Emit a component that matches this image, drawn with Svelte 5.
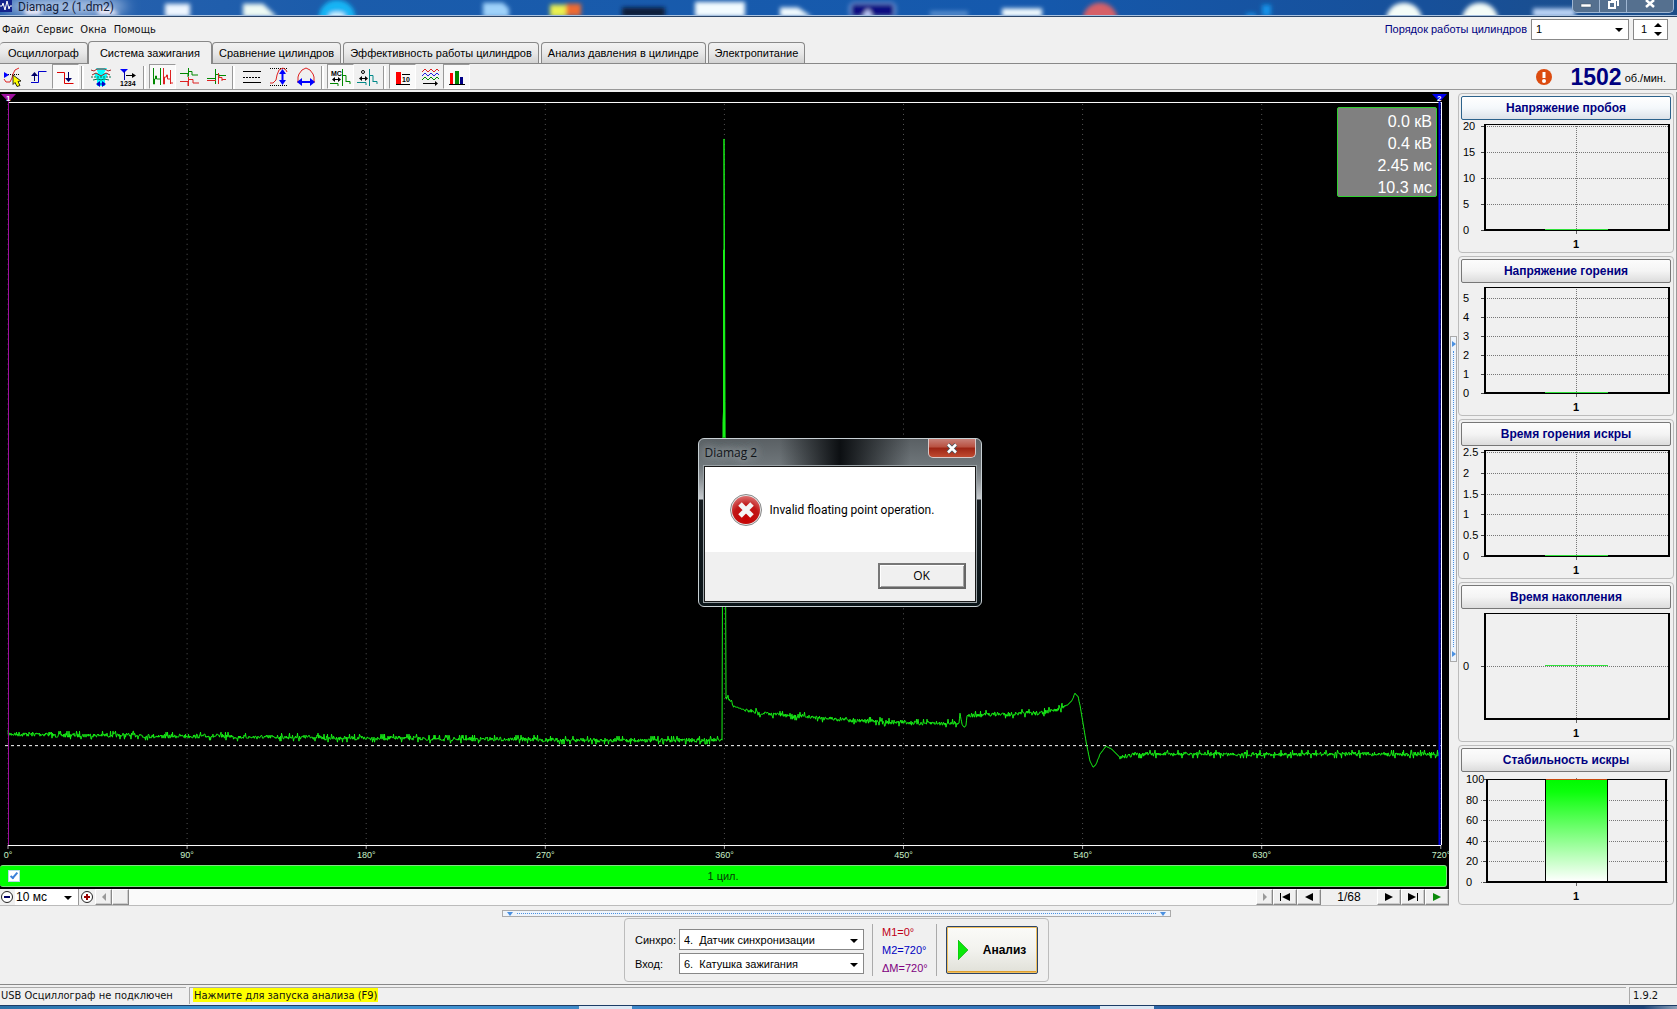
<script>
  const menu = ['Файл', 'Сервис', 'Окна', 'Помощь'];
  const tabs = [
    'Осциллограф',
    'Система зажигания',
    'Сравнение цилиндров',
    'Эффективность работы цилиндров',
    'Анализ давления в цилиндре',
    'Электропитание'
  ];
  const degrees = [0, 90, 180, 270, 360, 450, 540, 630, 720];
  const readings = ['0.0 кВ', '0.4 кВ', '2.45 мс', '10.3 мс'];

  const charts = [
    { title: 'Напряжение пробоя', ticks: [['20', 6], ['15', 32], ['10', 58], ['5', 84], ['0', 110]], mark: 109, focus: true },
    { title: 'Напряжение горения', ticks: [['5', 15], ['4', 34], ['3', 53], ['2', 72], ['1', 91], ['0', 110]], mark: 109 },
    { title: 'Время горения искры', ticks: [['2.5', 6], ['2', 27], ['1.5', 48], ['1', 68], ['0.5', 89], ['0', 110]], mark: 109 },
    { title: 'Время накопления', ticks: [['0', 57]], mark: 56 },
    { title: 'Стабильность искры', ticks: [['100', 7], ['80', 28], ['60', 48], ['40', 69], ['20', 89], ['0', 110]], bar: true }
  ];

  // Deterministic noise so the trace is the same on every render.
  let seed = 7;
  const noise = () => {
    seed = (seed * 16807) % 2147483647;
    const r = seed / 2147483647 - 0.5;
    return Math.round(r * (Math.abs(r) > 0.46 ? 8 : 4));
  };

  // Trace knots: [x, y, noisy]
  const before = [[8, 643, 1], [366, 647, 1], [600, 649, 1], [722, 649, 1]];
  const after = [
    [726, 607, 1], [730, 609, 1], [734, 615, 0], [745, 619, 1], [760, 622, 1], [800, 625, 1], [840, 628, 1],
    [890, 631, 1], [930, 632, 1], [959, 632, 0], [960, 622, 0], [962, 633, 0], [964, 636, 0], [966, 634, 0],
    [967, 624, 1], [1000, 623, 1], [1040, 622, 1], [1056, 619, 1], [1068, 613, 0], [1072, 609, 0], [1075, 602, 0],
    [1078, 605, 0], [1080, 614, 0], [1086, 650, 0], [1090, 670, 0], [1093, 676, 0], [1096, 673, 0], [1100, 663, 0],
    [1106, 655, 0], [1112, 658, 0], [1120, 666, 1], [1134, 663, 1], [1160, 663, 1], [1440, 663, 1]
  ];

  function trace(knots) {
    const pts = [];
    for (let i = 0; i < knots.length - 1; i++) {
      const [x0, y0, n] = knots[i];
      const [x1, y1] = knots[i + 1];
      for (let x = x0; x < x1; x += 0.5) {
        const y = y0 + ((y1 - y0) * (x - x0)) / (x1 - x0);
        pts.push(`${x},${Math.round(y) + (n ? noise() : 0)}`);
      }
    }
    return pts.join(' ');
  }
  const line = `${trace(before)} 722,649 723,330 724,310 724,47 725,310 726,607 ${trace(after)}`;
</script>

<div class="window">
  <header class="titlebar">
    <svg class="wall" viewBox="0 0 1677 16" preserveAspectRatio="none" aria-hidden="true">
      <defs>
        <filter id="soft" x="-20%" y="-60%" width="140%" height="220%"><feGaussianBlur stdDeviation="2" /></filter>
        <filter id="haze" x="-20%" y="-200%" width="140%" height="500%"><feGaussianBlur stdDeviation="7" /></filter>
      </defs>
      <ellipse cx="66" cy="7" rx="62" ry="9" fill="#b9cdea" filter="url(#haze)" />
      <g filter="url(#soft)">
        <path d="M25 16V9h16v7zM98 16V8l12 0 10 8z" fill="#f0eefa" />
        <rect x="165" y="4" width="25" height="14" fill="#eef6ff" />
        <path d="M243 18V4h20l14 14z" fill="#eefaf4" />
        <circle cx="337" cy="18" r="18" fill="#14b4f4" />
        <ellipse cx="337" cy="17" rx="8" ry="4" fill="#d8f6ff" />
        <path d="M483 18V3h20l6 6v9z" fill="#9fd2fa" />
        <rect x="550" y="5" width="16" height="13" fill="#eaf050" />
        <rect x="566" y="4" width="15" height="13" fill="#ee6a30" />
        <rect x="622" y="8" width="43" height="10" fill="#0a1c38" />
        <rect x="695" y="2" width="50" height="16" fill="#f2fbff" />
        <path d="M780 18V8h18l14 10z" fill="#f2fbff" />
        <rect x="850" y="3" width="45" height="16" rx="5" fill="#0c0c82" stroke="#7aa0e0" stroke-width="2" />
        <path d="M862 18l6-9 5 9z" fill="#c8d4ff" />
        <rect x="930" y="12" width="38" height="5" fill="#5d92cf" />
        <rect x="1002" y="9" width="40" height="9" fill="#f2fbff" />
        <circle cx="1100" cy="20" r="17" fill="#d66068" />
        <path d="M1246 14h10v4h-10zM1262 5h9v12h-9z" fill="#1492e8" />
        <circle cx="1404" cy="21" r="18" fill="#f4fcf8" />
        <circle cx="1480" cy="21" r="18" fill="#f4fcf8" />
        <rect x="1533" y="9" width="42" height="9" fill="#bcd4f6" />
      </g>
    </svg>
    <svg class="appicon" viewBox="0 0 12 12" aria-hidden="true">
      <rect width="12" height="12" fill="#14248c" />
      <path d="M0 6h2l1-3 2 7 2-9 2 8 1-3h2" fill="none" stroke="#fff" />
    </svg>
    <span class="apptitle">Diamag 2 (1.dm2)</span>
    <div class="winctl">
      <button aria-label="Свернуть"><svg viewBox="0 0 12 10"><rect x="1" y="4" width="10" height="3" fill="#fff" stroke="#456" stroke-width=".5" /></svg></button>
      <button aria-label="Восстановить"><svg viewBox="0 0 12 10"><path d="M4 0h7v6M2 2h6v6H2z" fill="none" stroke="#fff" stroke-width="2" /></svg></button>
      <button class="x" aria-label="Закрыть"><svg viewBox="0 0 12 10"><path d="M2 0l8 7M10 0L2 7" stroke="#fff" stroke-width="2.5" /></svg></button>
    </div>
  </header>

  <div class="menubar">
    <nav>
      {#each menu as m}<a href="#{m}">{m}</a>{/each}
    </nav>
    <div class="order">
      <label for="order">Порядок работы цилиндров</label>
      <div class="combo">
        <select id="order"><option>1</option></select>
        <svg class="arrow" viewBox="0 0 8 4"><path d="M0 0h8L4 4z" /></svg>
      </div>
      <div class="spin">
        <input type="text" value="1" aria-label="Номер цилиндра" />
        <svg viewBox="0 0 8 13"><path d="M0 4h8L4 0zM0 9h8l-4 4z" /></svg>
      </div>
    </div>
  </div>

  <div class="tabs" role="tablist">
    {#each tabs as t, i}
      <button role="tab" class:active={i === 1} aria-selected={i === 1}>{t}</button>
    {/each}
  </div>

  <div class="toolbar">
    <div class="tools">
      <div class="group first">
        <button aria-label="Курсор">
          <svg viewBox="0 0 22 20"><path d="M7 7.5h11" stroke="#000" stroke-dasharray="1 1" /><path d="M3 5l5 3-5 3z" fill="#00f" /><path d="M3 12l2 3h4l2-4 1-4 2-4 4-2" fill="none" stroke="#d22" /><path d="M12 8l8 6-3 .5 2 4-3 1-2-4-2 2z" fill="#ff0" stroke="#000" stroke-width=".8" /></svg>
        </button>
        <button aria-label="Фронт вверх">
          <svg viewBox="0 0 22 20"><path d="M3 15.500h7.500v-11h8" fill="none" stroke="#00c" /><path d="M6.500 14v-7" stroke="#006" /><path d="M3 9h7L6.500 5z" fill="#006" /></svg>
        </button>
        <button class="on" aria-label="Фронт вниз">
          <svg viewBox="0 0 22 20"><path d="M2 5.500h7.500v11h9" fill="none" stroke="#d00" /><path d="M13.500 5v8" stroke="#006" /><path d="M10 11h7l-3.500 4z" fill="#006" /></svg>
        </button>
      </div>
      <div class="group">
        <button aria-label="Наложение">
          <svg viewBox="0 0 22 20"><path d="M6 1h11l-3 5h4l-3 7v6H7v-6L4 6h4z" fill="#0ff" /><path d="M1 3l3 1 3-2h8l3 2 3-1M2 8l4-2 5 3 5-3 4 2" fill="none" stroke="#a22" /><path d="M1 10h20" stroke="#075" stroke-dasharray="2 1" /><path d="M3 13l5-1 3 1 3-1 5 1" fill="none" stroke="#075" /><path d="M8 17h6" stroke="#00c" /><path d="M10 14l-4 3 4 3zM12 14l4 3-4 3z" fill="#00c" /></svg>
        </button>
        <button aria-label="Нумерация">
          <svg viewBox="0 0 22 20"><path d="M3 2h8L7 6z" fill="#00f" /><path d="M7.500 4v9" stroke="#00a" /><path d="M9 8.500h8" stroke="#000" /><path d="M15 6l4 2.500-4 2.500z" /><text x="3" y="19" font-size="7" font-weight="700">1234</text></svg>
        </button>
      </div>
      <div class="group">
        <button class="on" aria-label="Последовательно">
          <svg viewBox="0 0 22 20"><path d="M1.500 1v16h1v-5h1v-3h1v3h4M8.500 1v17" fill="none" stroke="#080" /><path d="M11.500 1v16h1v-7h2v-2h1v4h3M18.500 3v14M19 16h2" fill="none" stroke="#d22" /></svg>
        </button>
        <button aria-label="Растр">
          <svg viewBox="0 0 22 20"><path d="M1 6.500h8V10M9.500 1v8M10 4.500h3V8h6" fill="none" stroke="#080" /><path d="M1 14.500h8V19M9.500 10v9M10 12.500h4V16h6" fill="none" stroke="#d22" /></svg>
        </button>
        <button aria-label="Парад">
          <svg viewBox="0 0 22 20"><path d="M1 11.500h8M9.500 2v15M10 7.500h3V11M13 8.500h7" fill="none" stroke="#080" /><path d="M1 13.500h9M12.500 6v11M13 10.500h3V14M16 12.500h4" fill="none" stroke="#d22" /></svg>
        </button>
      </div>
      <div class="group">
        <button aria-label="Линии">
          <svg viewBox="0 0 22 20"><path d="M2 4.500h18M2 15.500h18" stroke="#000" /><path d="M2 10.500h18" stroke="#000" stroke-dasharray="2 1" /></svg>
        </button>
        <button aria-label="Масштаб по вертикали">
          <svg viewBox="0 0 22 20"><path d="M2 1.500h17M2 18.500h17" stroke="#000" stroke-dasharray="1 1" /><path d="M2 16h3l3-3 1-5 2-5 4-2 3 2 1 2" fill="none" stroke="#d22" /><path d="M14.500 5v10" stroke="#00f" stroke-width="2" /><path d="M11 7h7l-3.500-5zM11 13h7l-3.500 5z" fill="#00f" /></svg>
        </button>
        <button aria-label="Масштаб по горизонтали">
          <svg viewBox="0 0 22 20"><path d="M3 15V10l1-3 3-4 4-2 4 2 3 4 1 3v5M2 15h18" fill="none" stroke="#d22" /><path d="M5 15h12" stroke="#00f" stroke-width="2" /><path d="M7 11v8l-5-4zM15 11v8l5-4z" fill="#00f" /></svg>
        </button>
      </div>
      <div class="group">
        <button class="on" aria-label="Миллисекунды">
          <svg viewBox="0 0 22 20"><text x="1" y="9" font-size="7" font-weight="700">МС</text><path d="M3 12.500h7" stroke="#000" /><path d="M5 10v5l-3-2.500zM8 10v5l3-2.500z" /><path d="M0 16.500h8V19M12.500 2v17M13 8.500h3V15M16 14.500h4V17" fill="none" stroke="#080" /></svg>
        </button>
        <button aria-label="Градусы">
          <svg viewBox="0 0 22 20"><circle cx="6" cy="5" r="1.500" fill="none" stroke="#000" /><path d="M3 11.500h7" stroke="#000" /><path d="M5 9v5l-3-2.500zM8 9v5l3-2.500z" /><path d="M0 15.500h9V18M12.500 2v17M13 8.500h3V15M16 14.500h4V17" fill="none" stroke="#088" /></svg>
        </button>
      </div>
      <div class="group last">
        <button class="on" aria-label="Значения">
          <svg viewBox="0 0 22 20"><rect x="4" y="5" width="5" height="12" fill="#f00" /><path d="M4 17.500h14M10 7.500h8" stroke="#000" /><text x="10" y="15" font-size="7" font-weight="700">10</text></svg>
        </button>
        <button aria-label="Наложенные кривые">
          <svg viewBox="0 0 22 20"><path d="M3 5l3-3 3 3 3-3 3 3 3-3 2 2" fill="none" stroke="#d22" /><path d="M3 9l3-3 3 3 3-3 3 3 3-3 2 2" fill="none" stroke="#22d" /><path d="M3 13l3-3 3 3 3-3 3 3 3-3 2 2" fill="none" stroke="#080" /><path d="M4 16.500h14" stroke="#000" /><path d="M16 14l3 2.500-3 2.500z" /></svg>
        </button>
        <button class="on" aria-label="Гистограммы">
          <svg viewBox="0 0 22 20"><rect x="4" y="6" width="3" height="11" fill="#f00" /><rect x="9" y="4" width="4" height="13" fill="#080" /><rect x="14" y="10" width="3" height="7" fill="#008" /><path d="M3 17.500h16" stroke="#000" /></svg>
        </button>
      </div>
    </div>
    <div class="rpm">
      <svg viewBox="0 0 16 16" aria-label="Внимание"><circle cx="8" cy="8" r="8" fill="#dc4c10" /><path d="M8 3v6" stroke="#fff" stroke-width="3" /><circle cx="8" cy="12" r="2" fill="#fff" /></svg>
      <strong>1502</strong><span>об./мин.</span>
    </div>
  </div>

  <main>
    <section class="scope">
      <div class="plot">
        <svg class="wave" viewBox="0 0 1449 774" preserveAspectRatio="none" aria-label="Осциллограмма">
          {#each degrees as d}
            <path d="M{8 + d * 1.99} 12V754" class="grid" />
            <path d="M{8 + d * 1.99} 754v4" stroke="#aaa" />
          {/each}
          <path d="M8 10.500H1441M8 754.500H1441" stroke="#fff" />
          <path d="M5 654.500H1441" stroke="#fff" stroke-dasharray="3 3" />
          <polyline points={line} fill="none" stroke="#17f017" />
          <path d="M724 158V346" stroke="#17f017" stroke-width="2" />
          <path d="M8.500 10V754" stroke="#a010a0" />
          <path d="M1439.500 10V754" stroke="#00d" stroke-width="2" />
          <path d="M1441.500 10V754" stroke="#fff" />
          <path d="M1 2h15L8.500 10z" fill="#a010a0" />
          <path d="M1432 2h15l-7.500 8z" fill="#00e" />
          <text x="6" y="9" class="mk">1</text>
          <text x="1437" y="9" class="mk">2</text>
        </svg>
        <div class="readout">
          {#each readings as r}<span>{r}</span>{/each}
        </div>
      </div>
      <div class="axis">
        {#each degrees as d}<span>{d}°</span>{/each}
      </div>
      <label class="cyl">
        <input type="checkbox" checked />
        <span>1 цил.</span>
      </label>
      <div class="scroll">
        <button class="flat" aria-label="Уменьшить"><svg viewBox="0 0 14 14"><circle cx="6" cy="7" r="5.500" fill="#fff" stroke="#222" /><path d="M3 7h6" stroke="#006" stroke-width="2" /></svg></button>
        <div class="combo zoom">
          <select aria-label="Развёртка"><option>10 мс</option></select>
          <svg class="arrow" viewBox="0 0 8 4"><path d="M0 0h8L4 4z" /></svg>
        </div>
        <button class="flat plus" aria-label="Увеличить"><svg viewBox="0 0 14 14"><circle cx="7" cy="7" r="5.500" fill="#fff" stroke="#222" /><path d="M4 7h6M7 4v6" stroke="#900" stroke-width="2" /></svg></button>
        <button class="raised sm" aria-label="Влево"><svg viewBox="0 0 12 10"><path d="M8 1v8L4 5z" fill="#999" /></svg></button>
        <button class="raised sm" aria-label="Ползунок"></button>
        <div class="track"></div>
        <button class="raised sm" aria-label="Вправо"><svg viewBox="0 0 12 10"><path d="M4 1v8l4-4z" fill="#999" /></svg></button>
        <button class="raised" aria-label="В начало"><svg viewBox="0 0 12 10"><path d="M1 1h1v8H1zM11 1v8L3 5z" /></svg></button>
        <button class="raised" aria-label="Назад"><svg viewBox="0 0 12 10"><path d="M10 1v8L2 5z" /></svg></button>
        <span class="page">1/68</span>
        <button class="raised" aria-label="Вперёд"><svg viewBox="0 0 12 10"><path d="M2 1v8l8-4z" /></svg></button>
        <button class="raised" aria-label="В конец"><svg viewBox="0 0 12 10"><path d="M1 1v8l8-4zM10 1h1v8h-1z" /></svg></button>
        <button class="raised" aria-label="Пуск"><svg viewBox="0 0 12 10"><path d="M2 1v8l8-4z" fill="#0a8a0a" /></svg></button>
      </div>
    </section>

    <div class="vsplit">
      <div>
        <svg viewBox="0 0 4 6"><path d="M0 0v6l4-3z" fill="#4a90e0" /></svg>
        <i></i>
        <svg viewBox="0 0 4 6"><path d="M0 0v6l4-3z" fill="#4a90e0" /></svg>
      </div>
    </div>

    <aside>
      {#each charts as c}
        <section class="card">
          <button class:focus={c.focus}>{c.title}</button>
          <svg viewBox="0 0 210 132" aria-label={c.title}>
            {#each c.ticks as [t, y]}
              <text x={c.bar ? 5 : 2} y={y + 4}>{t}</text>
              <path d="M20 {y + 0.5}H208" class="dots" />
              <path d="M{c.bar ? 22 : 20} {y + 0.5}h4" stroke="#444" />
            {/each}
            <path d="M115.500 6V114" class="dots" />
            <path d="M115.500 110v4" stroke="#666" />
            {#if c.bar}
              <defs>
                <linearGradient id="fill" x1="0" y1="0" x2="0" y2="1"><stop offset="0" stop-color="#00fa00" /><stop offset=".12" stop-color="#0bff0b" /><stop offset="1" stop-color="#fff" /></linearGradient>
              </defs>
              <path d="M26 7.500H205" stroke="#000" />
              <path d="M205 7v103" stroke="#000" stroke-width="2" />
              <path d="M26 7v103H206" fill="none" stroke="#000" stroke-width="2" />
              <rect x="84.500" y="7.500" width="62" height="102" fill="url(#fill)" stroke="#000" />
              <path d="M85 7.500h61" stroke="#c84a10" />
            {:else}
              <path d="M23 4.500H209" stroke="#000" />
              <path d="M24 4v106H208V4" fill="none" stroke="#000" stroke-width="2" />
              <path d="M84 {c.mark + 0.5}h63" stroke="#2fe03a" />
            {/if}
            <text x="115" y="128" text-anchor="middle" font-weight="700">1</text>
          </svg>
        </section>
      {/each}
    </aside>
  </main>

  <footer class="control">
    <div class="hsplit">
      <svg viewBox="0 0 6 4"><path d="M0 0h6L3 4z" fill="#4a90e0" /></svg>
      <i></i>
      <svg viewBox="0 0 6 4"><path d="M0 0h6L3 4z" fill="#4a90e0" /></svg>
    </div>
    <div class="panel">
      <div class="fields">
        <label for="sync">Синхро:</label>
        <div class="combo">
          <select id="sync"><option>4.&nbsp; Датчик синхронизации</option></select>
          <svg class="arrow" viewBox="0 0 8 4"><path d="M0 0h8L4 4z" /></svg>
        </div>
        <label for="input">Вход:</label>
        <div class="combo">
          <select id="input"><option>6.&nbsp; Катушка зажигания</option></select>
          <svg class="arrow" viewBox="0 0 8 4"><path d="M0 0h8L4 4z" /></svg>
        </div>
      </div>
      <div class="marks">
        <span class="m1">M1=0°</span>
        <span class="m2">M2=720°</span>
        <span class="dm">ΔM=720°</span>
      </div>
      <button class="run">
        <svg viewBox="0 0 10 20"><path d="M0 0v20l10-10z" fill="#0be80b" stroke="#0a9a0a" stroke-width=".6" /></svg>
        <span>Анализ</span>
      </button>
    </div>
  </footer>

  <div class="status">
    <span class="conn">USB Осциллограф не подключен</span>
    <span class="hint"><mark>Нажмите для запуска анализа (F9)</mark></span>
    <span class="ver">1.9.2</span>
  </div>
  <div class="taskbar"></div>

  <div class="dialog" role="dialog" aria-labelledby="dlgtitle">
    <div class="dlghead">
      <span id="dlgtitle">Diamag 2</span>
      <button aria-label="Закрыть"><svg viewBox="0 0 12 11"><path d="M2 1.500l8 8M10 1.500l-8 8" stroke="#44555f" stroke-width="4" /><path d="M2 1.500l8 8M10 1.500l-8 8" stroke="#fff" stroke-width="2.500" /></svg></button>
    </div>
    <div class="dlgbody">
      <div class="msg">
        <svg viewBox="0 0 32 32" aria-hidden="true">
          <defs><radialGradient id="red" cx=".5" cy=".8" r=".8"><stop offset="0" stop-color="#c80000" /><stop offset=".6" stop-color="#c01818" /><stop offset="1" stop-color="#dc7070" /></radialGradient></defs>
          <circle cx="16" cy="16" r="15.500" fill="#e8e8e8" stroke="#888" />
          <circle cx="16" cy="16" r="14" fill="url(#red)" />
          <path d="M10 10l12 12M22 10L10 22" stroke="#f4f4f4" stroke-width="5" />
        </svg>
        <span>Invalid floating point operation.</span>
      </div>
      <div class="actions"><button>OK</button></div>
    </div>
  </div>
</div>

<style>
  :global(body) { margin: 0; background: #f0f0f0; }
  .window {
    position: relative;
    display: flex;
    flex-direction: column;
    min-height: 100vh;
    background: #f0f0f0;
    color: #000;
    font: 11px/16px 'Liberation Sans', Arial, sans-serif;
    overflow: hidden;
  }
  .window *, .window *::before { box-sizing: border-box; }
  svg { display: block; }
  button, select, input { font: inherit; color: inherit; margin: 0; padding: 0; border-radius: 0; }
  button { display: flex; align-items: center; justify-content: center; }

  .titlebar {
    position: relative;
    display: flex;
    height: 17px;
    background: linear-gradient(90deg, #2a62ae, #1b5cab 20%, #1559ad 60%, #17509a 85%, #1c4d88);
    border-bottom: 1px solid #2c4668;
    box-shadow: inset 0 -1px #a9c2e0;
  }
  .wall { position: absolute; inset: 0 0 2px; width: 100%; height: 15px; }
  .appicon { position: relative; width: 12px; height: 12px; }
  .apptitle { position: relative; margin-left: 6px; font: 12px/14px Roboto, sans-serif; color: #12203a; }
  .winctl {
    position: relative;
    display: flex;
    height: 13px;
    margin: 0 3px 0 auto;
    border: 1px solid #9fb6d2;
    border-top: 0;
    border-radius: 0 0 5px 5px;
    background: #55708f;
  }
  .winctl button { width: 27px; height: 12px; border: 0; border-right: 1px solid #9fb6d2; background: none; align-items: flex-start; }
  .winctl .x { width: 46px; border: 0; }
  .winctl svg { width: 12px; height: 10px; }

  .menubar { display: flex; justify-content: space-between; height: 24px; padding-right: 9px; }
  nav { display: flex; gap: 7px; padding: 5px 0 0 2px; font: 11px/16px 'DejaVu Sans Condensed', Tahoma, sans-serif; }
  nav a { color: #111; text-decoration: none; }
  .order { display: flex; align-items: center; gap: 4px; color: #000080; }
  .order .combo { width: 98px; color: #000; }
  .combo { position: relative; height: 21px; }
  .combo select {
    appearance: none;
    width: 100%;
    height: 100%;
    padding: 0 20px 0 4px;
    border: 1px solid #888;
    background: #fff;
    outline: 0;
  }
  .arrow { position: absolute; right: 6px; top: 50%; width: 8px; height: 4px; margin-top: -1px; pointer-events: none; }
  .spin { display: flex; align-items: center; width: 35px; height: 21px; border: 1px solid #888; background: #fff; color: #000; }
  .spin input { width: 20px; padding-left: 7px; border: 0; background: none; outline: 0; }
  .spin svg { width: 8px; height: 13px; }

  .tabs { display: flex; align-items: flex-end; gap: 2px; height: 23px; border-bottom: 1px solid #888; }
  .tabs button {
    height: 21px;
    padding: 0 6px;
    border: 1px solid #888;
    border-bottom: 0;
    border-radius: 4px 4px 0 0;
    background: linear-gradient(#f2f2f2, #e8e8e8 50%, #d2d2d2);
    white-space: nowrap;
  }
  .tabs button:first-child { padding: 0 8px; border-left: 0; margin-right: -2px; }
  .tabs .active { height: 23px; margin-bottom: -1px; margin-right: -2px; padding: 0 11px; background: #f0f0f0; }

  .toolbar { display: flex; justify-content: space-between; height: 26px; border-bottom: 1px solid #999; border-right: 1px solid #999; }
  .tools { display: flex; }
  .group { position: relative; display: flex; margin-right: 8px; }
  .group::after { content: ''; position: absolute; right: -5px; top: 2px; bottom: 0; width: 2px; border-left: 1px solid #999; background: #fff; }
  .group.last::after { display: none; }
  .group.first { margin-left: -2px; }
  .group button { width: 27px; height: 25px; border: 1px solid transparent; background: none; }
  .group .on { border-color: #999 #fff #fff #999; background: #f9f9f9; }
  .group svg { width: 22px; height: 20px; }
  .rpm { display: flex; align-items: center; padding-right: 10px; }
  .rpm svg { width: 16px; height: 16px; }
  .rpm strong { margin-left: 18px; font-size: 23px; line-height: 24px; color: #000080; }
  .rpm span { margin: 3px 0 0 3px; }

  main { display: flex; flex: 1; padding-top: 2px; }
  .scope { display: flex; flex-direction: column; flex: 1; min-width: 0; background: #000; }
  .plot { position: relative; flex: 1; min-height: 300px; }
  .wave { position: absolute; inset: 0; width: 100%; height: 100%; }
  .wave polyline { shape-rendering: crispEdges; }
  .grid { stroke: #555; stroke-dasharray: 1 4; }
  .mk { fill: #fff; font-size: 8px; font-weight: 700; }
  .readout {
    position: absolute;
    right: 12px;
    top: 15px;
    display: flex;
    flex-direction: column;
    width: 100px;
    height: 90px;
    padding: 3px 4px 0 0;
    border: 1px solid #2fd02f;
    border-radius: 2px;
    background: #808080;
    color: #fff;
    font-size: 16px;
    line-height: 22px;
    text-align: right;
  }
  .axis { display: flex; justify-content: space-between; margin-top: -17px; padding: 0 8px; height: 14px; position: relative; color: #c8f0c8; font-size: 9px; line-height: 14px; }
  .axis span { display: flex; justify-content: center; width: 0; }
  .cyl {
    position: relative;
    display: flex;
    align-items: center;
    height: 22px;
    margin: 3px 2px 2px 0;
    padding-left: 8px;
    border: 1px solid #80e080;
    border-left: 0;
    border-radius: 3px;
    background: #0f0;
    color: #063c06;
  }
  .cyl input { appearance: none; width: 12px; height: 12px; border: 1px solid #b8d8e8; background: #fff; position: relative; }
  .cyl input::before { content: ''; display: block; width: 4px; height: 8px; margin: 0 0 0 3px; border: solid #3a80d8; border-width: 0 2px 2px 0; rotate: 40deg; }
  .cyl span { flex: 1; text-align: center; margin-right: 20px; }
  .scroll { display: flex; height: 17px; background: #f0f0f0; border-bottom: 1px solid #bbb; font-size: 12px; }
  .scroll button { height: 16px; background: #f0f0f0; }
  .flat { width: 15px; border: 0; }
  .flat svg { width: 14px; height: 14px; }
  .plus { width: 17px; border-left: 1px solid #999; }
  .zoom { width: 63px; height: 16px; }
  .zoom select { border: 0; padding-left: 1px; }
  .raised { width: 24px; border: 1px solid; border-color: #fff #888 #888 #fff; box-shadow: inset -1px -1px #ccc; }
  .raised svg { width: 12px; height: 10px; }
  .sm { width: 17px; }
  .track { flex: 1; background: #fafafa; }
  .page { width: 56px; text-align: center; }

  .vsplit { display: flex; align-items: center; width: 9px; padding-left: 1px; }
  .vsplit div { display: flex; flex-direction: column; align-items: center; width: 7px; height: 40%; padding: 4px 0; border: 1px solid #aaa; background: #eef4fb; }
  .vsplit svg { width: 4px; height: 6px; }
  .vsplit i { flex: 1; margin: 4px 0; border-left: 1px dotted #4a90e0; }

  aside { width: 219px; display: flex; flex-direction: column; gap: 3px; padding: 1px 2px 0 0; border-right: 1px solid #999; }
  .card { height: 160px; padding: 2px; border: 1px solid #bcbcbc; border-radius: 4px; }
  .card button {
    width: 100%;
    height: 24px;
    border: 1px solid #777;
    border-radius: 2px;
    background: linear-gradient(#fcfcfc, #f4f4f4 50%, #dcdcdc);
    color: #000080;
    font-size: 12px;
    font-weight: 700;
  }
  .card .focus { border-color: #2c628b; background: linear-gradient(#fff, #f4f8fb 50%, #dce2e8); }
  .card svg { width: 100%; height: 132px; overflow: visible; font-size: 11px; }
  .dots { stroke: #777; stroke-dasharray: 1 1; }

  .control { display: flex; flex-direction: column; align-items: center; height: 79px; padding: 4px 3px 0 0; border-bottom: 1px solid #888; border-right: 1px solid #999; }
  .hsplit { display: flex; align-items: center; width: 40%; height: 7px; padding: 0 4px; border: 1px solid #aaa; background: #eef4fb; }
  .hsplit svg { width: 6px; height: 4px; }
  .hsplit i { flex: 1; margin: 0 4px; border-top: 1px dotted #4a90e0; }
  .panel { display: flex; align-items: center; height: 64px; margin-top: 1px; padding: 0 10px; border: 1px solid #bcbcbc; border-radius: 4px; }
  .fields { display: grid; grid-template-columns: 44px 185px; row-gap: 3px; align-items: center; padding-top: 3px; }
  .marks { display: flex; flex-direction: column; justify-content: space-between; width: 65px; height: 52px; margin: 0 9px 0 8px; padding-left: 9px; border-left: 1px solid #aaa; border-right: 1px solid #aaa; }
  .m1 { color: #c00018; }
  .m2 { color: #0000c0; }
  .dm { color: #800080; }
  .run {
    width: 92px;
    height: 48px;
    gap: 15px;
    border: 1px solid #2c4468;
    border-radius: 2px;
    background: linear-gradient(#fbfbf8, #f2f2ee 50%, #e0e0d8);
    box-shadow: inset 0 0 0 1px #f0c060, inset 0 -2px #e0a030;
    font-size: 12px;
    font-weight: 700;
  }
  .run svg { width: 10px; height: 20px; }

  .status { display: flex; gap: 3px; height: 20px; padding-top: 2px; font: 11px/16px 'DejaVu Sans Condensed', Tahoma, sans-serif; color: #111; }
  .status > span { height: 17px; border-top: 1px solid #aaa; border-left: 1px solid #aaa; padding-left: 3px; white-space: nowrap; }
  .status .conn { width: 186px; border-left: 0; padding-left: 1px; }
  .status .hint { flex: 1; }
  .status .ver { width: 48px; }
  mark { display: inline-block; height: 14px; line-height: 15px; background: #ff0; color: #111; padding: 0 1px; }
  .taskbar {
    height: 4px;
    border-top: 1px solid #1d3c66;
    background: linear-gradient(90deg, #2a70a8, #3f9ad8 15%, #3f8ac8 34.5%, #dbe8f4 34.5%, #dbe8f4 37.7%, #3c86c8 37.7%, #3070b4 65.6%, #dbe8f4 65.6%, #dbe8f4 68.8%, #2c66a8 68.8%, #1c4478 98%, #8aa0b8);
  }

  .dialog {
    position: absolute;
    left: calc(50% - 141px);
    top: 438px;
    width: 284px;
    padding: 0 5px 4px;
    border: 1px solid #c8d0d4;
    border-radius: 6px;
    background: linear-gradient(#5a6064, #70777b 27px, #8a9094 40px, #c8ccd0 60px, #161c20 61px, #0a1418);
    font: 12px/16px 'Open Sans', 'Segoe UI', sans-serif;
  }
  .dlghead {
    display: flex;
    justify-content: space-between;
    height: 27px;
    background: linear-gradient(90deg, transparent 28%, #0c0f12 50%, transparent 76%);
  }
  .dlghead span { padding: 5px 0 0 1px; line-height: 17px; color: #101418; text-shadow: 0 0 8px #aab0b4, 0 0 8px #aab0b4; }
  .dlghead button {
    width: 48px;
    height: 19px;
    border: 1px solid #d8c8c8;
    border-top: 0;
    border-radius: 0 0 5px 5px;
    background: linear-gradient(#c88078, #b85040 45%, #9c2414 50%, #c04a30);
  }
  .dlghead svg { width: 12px; height: 11px; }
  .dlgbody { border: 1px solid #1a1a1a; outline: 1px solid #9aa2a6; background: #fff; }
  .msg { display: flex; align-items: center; gap: 8px; height: 85px; padding-left: 25px; font-family: Roboto, sans-serif; }
  .msg svg { width: 32px; height: 32px; flex: none; }
  .actions { display: flex; justify-content: flex-end; height: 49px; padding: 11px 9px 0 0; background: #f0f0f0; }
  .actions button { width: 88px; height: 26px; border: 2px solid; border-color: #777 #666 #666 #777; background: #f0f0f0; box-shadow: inset 1px 1px #fff, inset -1px -1px #a0a0a0; }
</style>
